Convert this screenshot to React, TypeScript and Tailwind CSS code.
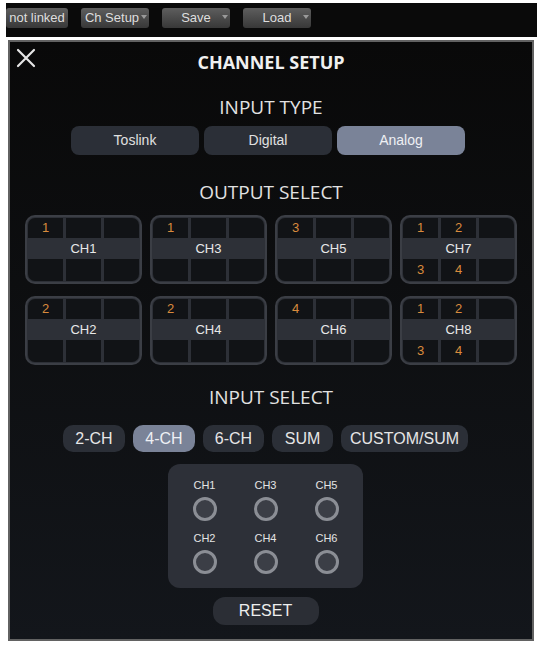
import React from "react";

const topButtons = [
    { label: "not linked", width: "w-[62px]", arrow: false },
    { label: "Ch Setup", width: "w-[68px]", arrow: true },
    { label: "Save", width: "w-[68px]", arrow: true },
    { label: "Load", width: "w-[68px]", arrow: true },
];

const inputTypes = ["Toslink", "Digital", "Analog"];

const inputSelect = [
    { label: "2-CH", width: "w-[62px]" },
    { label: "4-CH", width: "w-[62px]" },
    { label: "6-CH", width: "w-[61px]" },
    { label: "SUM", width: "w-[61px]" },
    { label: "CUSTOM/SUM", width: "w-[127px]" },
];

type Out = { name: string; top: string[]; bottom: string[] };

const outputRows: Out[][] = [
    [
        { name: "CH1", top: ["1", "", ""], bottom: ["", "", ""] },
        { name: "CH3", top: ["1", "", ""], bottom: ["", "", ""] },
        { name: "CH5", top: ["3", "", ""], bottom: ["", "", ""] },
        { name: "CH7", top: ["1", "2", ""], bottom: ["3", "4", ""] },
    ],
    [
        { name: "CH2", top: ["2", "", ""], bottom: ["", "", ""] },
        { name: "CH4", top: ["2", "", ""], bottom: ["", "", ""] },
        { name: "CH6", top: ["4", "", ""], bottom: ["", "", ""] },
        { name: "CH8", top: ["1", "2", ""], bottom: ["3", "4", ""] },
    ],
];

const inputChannels = ["CH1", "CH3", "CH5", "CH2", "CH4", "CH6"];

function OutputBox({ item }: { item: Out }) {
    return (
        <div className="w-[117px] h-[69px] border-2 border-[#3b3e45] rounded-[10px] bg-[#2d3037] overflow-hidden flex flex-col p-[1px]">
            <div className="grid grid-cols-3 gap-[3px] h-[20px]">
                {item.top.map((n, i) => (
                    <div
                        key={i}
                        className={
                            "bg-[#111316] flex items-center justify-center text-[13px] text-[#d98b3d] " +
                            (i === 0 ? "rounded-tl-[7px]" : i === 2 ? "rounded-tr-[7px]" : "")
                        }
                    >
                        {n}
                    </div>
                ))}
            </div>
            <div className="h-[21px] flex items-center justify-center text-[13px] text-[#e8e8e8]">
                {item.name}
            </div>
            <div className="grid grid-cols-3 gap-[3px] flex-1">
                {item.bottom.map((n, i) => (
                    <div
                        key={i}
                        className={
                            "bg-[#111316] flex items-center justify-center text-[13px] text-[#d98b3d] " +
                            (i === 0 ? "rounded-bl-[7px]" : i === 2 ? "rounded-br-[7px]" : "")
                        }
                    >
                        {n}
                    </div>
                ))}
            </div>
        </div>
    );
}

export default function App() {
    return (
        <div
            className="min-h-[649px] w-full bg-white pt-[3px]"
            style={{ fontFamily: '"Liberation Sans", Arial, sans-serif' }}
        >
            {/* top toolbar */}
            <div className="ml-[6px] mr-[5px] h-[34px] bg-[#0a0a0a] flex items-start pt-[5px] gap-[13px]">
                {topButtons.map((b) => (
                    <div
                        key={b.label}
                        className={
                            b.width +
                            " h-[20px] rounded-[3px] bg-gradient-to-b from-[#5e5e5e] to-[#383838] text-[13px] text-[#dedede] flex items-center justify-center relative"
                        }
                    >
                        <span className={b.label === "Ch Setup" ? "pr-[6px]" : ""}>{b.label}</span>
                        {b.arrow && (
                            <span className="absolute right-[2px] top-[7px] w-0 h-0 border-l-[3px] border-r-[3px] border-t-[4px] border-l-transparent border-r-transparent border-t-[#9a9a9a]" />
                        )}
                    </div>
                ))}
            </div>

            {/* channel setup panel */}
            <div className="mx-[8px] mt-[3px] h-[601px] border-2 border-[#626262] bg-gradient-to-b from-[#090909] to-[#13161b] flex flex-col">
                <div className="grid grid-cols-[40px_1fr_40px]">
                    <div className="pl-[6px] pt-[6px]">
                        <svg width="20" height="20" viewBox="0 0 20 20">
                            <path
                                d="M2 2 L18 18 M18 2 L2 18"
                                stroke="#e6e6e6"
                                strokeWidth="2.2"
                                strokeLinecap="round"
                            />
                        </svg>
                    </div>
                    <div
                        className="pt-[8px] h-[31px] text-center text-[18px] leading-[24px] font-bold text-[#f0f0f0]"
                        style={{ fontFamily: '"Open Sans", sans-serif' }}
                    >
                        CHANNEL SETUP
                    </div>
                    <div />
                </div>

                <div
                    className="mt-[22px] text-center text-[19px] leading-[24px] text-[#e2e2e2]"
                    style={{ fontFamily: '"Open Sans", sans-serif' }}
                >
                    INPUT TYPE
                </div>
                <div className="mt-[7px] flex justify-center gap-[5px] pr-[6px]">
                    {inputTypes.map((t) => (
                        <div
                            key={t}
                            className={
                                "w-[128px] h-[29px] rounded-[8px] flex items-center justify-center text-[14px] " +
                                (t === "Analog"
                                    ? "bg-[#7a8398] text-[#eef0f4]"
                                    : "bg-[#2b2f37] text-[#e0e0e0]")
                            }
                        >
                            {t}
                        </div>
                    ))}
                </div>

                <div
                    className="mt-[25px] text-center text-[19px] leading-[24px] text-[#e2e2e2]"
                    style={{ fontFamily: '"Open Sans", sans-serif' }}
                >
                    OUTPUT SELECT
                </div>
                <div className="mt-[11px] flex flex-col gap-[12px]">
                    {outputRows.map((row, r) => (
                        <div key={r} className="flex justify-center gap-[8px]">
                            {row.map((item) => (
                                <OutputBox key={item.name} item={item} />
                            ))}
                        </div>
                    ))}
                </div>

                <div
                    className="mt-[20px] text-center text-[19px] leading-[24px] text-[#e2e2e2]"
                    style={{ fontFamily: '"Open Sans", sans-serif' }}
                >
                    INPUT SELECT
                </div>
                <div className="mt-[16px] flex justify-center gap-[8px] pr-[11px]">
                    {inputSelect.map((b) => (
                        <div
                            key={b.label}
                            className={
                                b.width +
                                " h-[27px] rounded-[10px] flex items-center justify-center text-[16px] " +
                                (b.label === "4-CH"
                                    ? "bg-[#7a8398] text-[#eef0f4]"
                                    : "bg-[#2b2f37] text-[#e6e6e6]")
                            }
                        >
                            {b.label}
                        </div>
                    ))}
                </div>

                <div className="mt-[12px] flex justify-center pr-[11px]">
                    <div className="w-[195px] h-[124px] rounded-[12px] bg-[#2d3038] px-[6px] pt-[14px] grid grid-cols-3 gap-y-[10px] content-start">
                        {inputChannels.map((c) => (
                            <div key={c} className="flex flex-col items-center gap-[5px]">
                                <div className="h-[14px] leading-[14px] text-[11px] text-[#e4e4e4]">
                                    {c}
                                </div>
                                <div className="w-[24px] h-[24px] rounded-full border-[3px] border-[#8b8e95] bg-[#3b3e46]" />
                            </div>
                        ))}
                    </div>
                </div>

                <div className="mt-[9px] flex justify-center pr-[11px]">
                    <div className="w-[106px] h-[28px] rounded-[12px] bg-[#2b2e35] flex items-center justify-center text-[16px] text-[#eeeeee]">
                        RESET
                    </div>
                </div>
            </div>
        </div>
    );
}
